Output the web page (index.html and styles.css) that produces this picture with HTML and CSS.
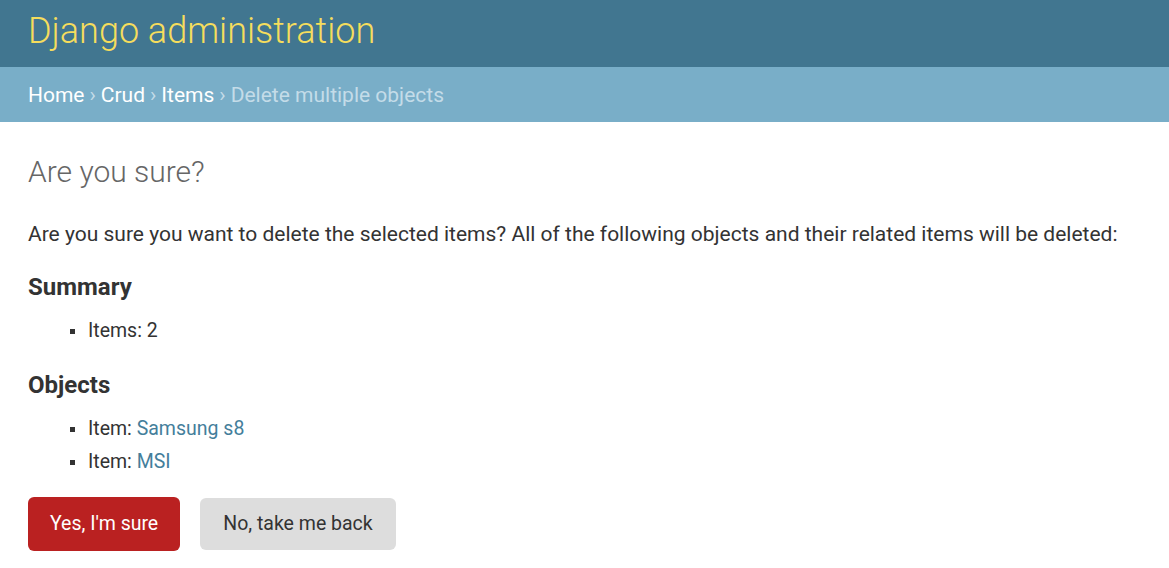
FILE: index.html
```html
<!DOCTYPE html>
<html lang="en">
<head>
<meta charset="utf-8">
<title>Are you sure? | Django site admin</title>
<link rel="stylesheet" href="styles.css">
</head>
<body>
<header class="header">
  <h1 class="branding">Django administration</h1>
</header>
<nav class="breadcrumbs">
  <a href="#">Home</a><span class="sep">›</span><a href="#">Crud</a><span class="sep">›</span><a href="#">Items</a><span class="sep">›</span><span class="current">Delete multiple objects</span>
</nav>
<main class="content">
  <h1 class="title">Are you sure?</h1>
  <p class="lead">Are you sure you want to delete the selected items? All of the following objects and their related items will be deleted:</p>
  <h2 class="section">Summary</h2>
  <ul class="list">
    <li>Items: 2</li>
  </ul>
  <h2 class="section">Objects</h2>
  <ul class="list">
    <li>Item: <a href="#">Samsung s8</a></li>
    <li>Item: <a href="#">MSI</a></li>
  </ul>
  <div class="actions">
    <button class="btn btn-danger" type="button">Yes, I'm sure</button>
    <a class="btn btn-cancel" href="#">No, take me back</a>
  </div>
</main>
</body>
</html>
```

FILE: styles.css
```css
html, body {
  margin: 0;
  padding: 0;
  background: #fff;
  font-family: Roboto, "Liberation Sans", sans-serif;
  color: #333;
}

.header {
  background: #417690;
  padding: 13px 28px 18px;
  height: 36px;
}

.branding {
  margin: 0;
  font-size: 36px;
  line-height: 36px;
  font-weight: 300;
  color: #f5dd5d;
}

.breadcrumbs {
  background: #79aec8;
  padding: 18px 28px 16px;
  font-size: 21px;
  line-height: 21px;
  color: #c4dce8;
}

.breadcrumbs a {
  color: #fff;
  text-decoration: none;
}

.breadcrumbs .sep {
  margin: 0 5px;
  color: #c4dce8;
}

.breadcrumbs .current {
  color: #c4dce8;
}

.content {
  padding: 32px 28px 0;
}

.title {
  margin: 0;
  font-size: 30px;
  line-height: 36px;
  font-weight: 300;
  color: #666;
}

.lead {
  margin: 29px 0 0;
  font-size: 21px;
  line-height: 30px;
}

.section {
  margin: 23px 0 0;
  font-size: 24px;
  line-height: 30px;
  font-weight: 700;
  color: #333;
}

.list {
  list-style: none;
  margin: 12px 0 0;
  padding: 0 0 0 42px;
  font-size: 19.5px;
  line-height: 33px;
}

.list li::before {
  content: "";
  display: inline-block;
  width: 5px;
  height: 5px;
  background: #333;
  margin-right: 13px;
  vertical-align: middle;
}

.list a {
  color: #447e9b;
  text-decoration: none;
}

.actions {
  display: flex;
  align-items: center;
  gap: 20px;
  margin-top: 19px;
}

.btn {
  font-family: Roboto, "Liberation Sans", sans-serif;
  font-size: 19.5px;
  border: none;
  border-radius: 6px;
  text-decoration: none;
  cursor: pointer;
}

.btn-danger {
  background: #ba2121;
  color: #fff;
  height: 54px;
  line-height: 54px;
  padding: 0 22px;
}

.btn-cancel {
  display: block;
  background: #ddd;
  color: #333;
  height: 52px;
  line-height: 52px;
  padding: 0 23px;
}
```
